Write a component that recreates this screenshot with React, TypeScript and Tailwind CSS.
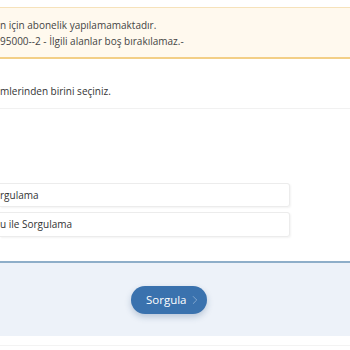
import { ChevronRight } from 'lucide-react';

const font = { fontFamily: '"Open Sans", "Noto Sans", sans-serif' };

export default function App() {
  return (
    <div className="w-[350px] h-[350px] overflow-hidden bg-white text-[#333]" style={font}>
      {/* warning box */}
      <div className="mt-[7px] h-[52px] border-t border-[#f6e2bb] border-b-2 border-b-[#f3cf86] bg-[#fff9ee] flex flex-col justify-center text-[10px] leading-[16px] text-[#444] whitespace-nowrap">
        <p>n için abonelik yapılamamaktadır.</p>
        <p>95000--2 - İlgili alanlar boş bırakılamaz.-</p>
      </div>

      {/* instruction */}
      <div className="mt-[24px] border-b border-[#f1f1f1] pb-[9px] text-[10px] leading-[16px] whitespace-nowrap">
        mlerinden birini seçiniz.
      </div>

      {/* options */}
      <div className="mt-[74px] w-[290px] flex flex-col gap-[5px] text-[10px] whitespace-nowrap">
        <div className="h-[24px] flex items-center border border-[#ececec] rounded-r-[3px] border-l-0 shadow-[1px_1px_2px_rgba(0,0,0,0.05)]">
          rgulama
        </div>
        <div className="h-[25px] flex items-center border border-[#ececec] rounded-r-[3px] border-l-0 shadow-[1px_1px_2px_rgba(0,0,0,0.05)]">
          u ile Sorgulama
        </div>
      </div>

      {/* action bar */}
      <div className="mt-[24px] h-[75px] border-t-2 border-[#8eaec9] bg-[#edf2f9] flex items-center">
        <button className="ml-[131px] w-[76px] h-[28px] rounded-full bg-[#3a72ae] text-white text-[11.5px] flex items-center pl-[15px] gap-[1px] shadow-[0_3px_6px_rgba(30,70,120,0.25)]">
          <span>Sorgula</span>
          <ChevronRight size={14} strokeWidth={1.1} className="text-[#a7c2e0]" />
        </button>
      </div>
      <div className="mt-[9px] border-t border-[#f3f3f3]" />
    </div>
  );
}
